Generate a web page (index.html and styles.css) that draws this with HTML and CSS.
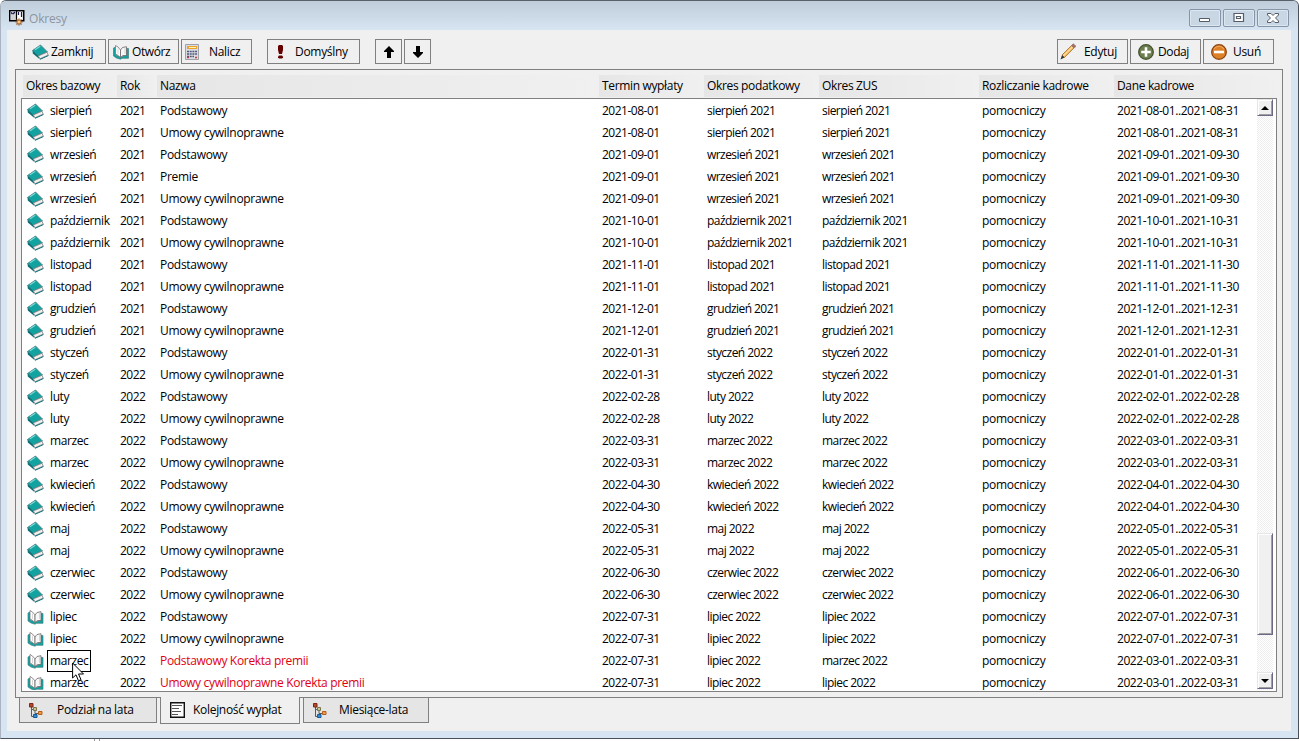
FILE: index.html
```html
<!DOCTYPE html>
<html lang="pl">
<head>
<meta charset="utf-8">
<title>Okresy</title>
<link rel="stylesheet" href="styles.css">
</head>
<body>
<svg class="defs" width="0" height="0">
  <symbol id="book" viewBox="0 0 17 16">
    <path d="M.5 6.500 8.500 1 15.500 8 6 12Z" fill="#12a3a1" stroke="#4f7f84" stroke-width=".9"/>
    <path d="M3 5.800 8.300 2.300" stroke="#79dcd8" stroke-width="1.100"/>
    <path d="M.5 6.500 6 11.800 8 15.500 .800 9.500Z" fill="#0a6f76"/>
    <path d="M6.300 12 15 8.300 16.200 11 8.300 14.600Z" fill="#f2f2f2" stroke="#777" stroke-width=".7"/>
    <path d="M8 15.300 16.500 11.500" stroke="#0a6f76" stroke-width="1"/>
  </symbol>
  <symbol id="open" viewBox="0 0 16 16">
    <path d="M.5 4 2.500 3V11L8 13 13 11.500 13.500 4.500H15.500V14.300H9L7.500 15.200 3.500 14 .5 12Z" fill="#12a3a1" stroke="#3f7f84" stroke-width=".7"/>
    <path d="M2.500 1.500 5 3 7.500 6V13.500L4.500 11 2.500 10Z" fill="#fff" stroke="#777" stroke-width=".8"/>
    <path d="M7.500 6 9.500 3.500 13.500 2.700V11.500L10 11.500 7.500 13.500Z" fill="#f7f7f7" stroke="#666" stroke-width=".8"/>
    <path d="M12 4V10M5 4.500V10" stroke="#ccc" stroke-width=".8"/>
  </symbol>
  <symbol id="tree" viewBox="0 0 14 15">
    <path d="M2.500 4V13.500H5M2.500 6.500H5M6 8V10.500H9" fill="none" stroke="#555c60" stroke-width="1"/>
    <path d="M.5 .5h3.500v3.500h-3.500z" fill="#b5482c" stroke="#7c2814"/>
    <path d="M4.500 4.500h3v3h-3z" fill="#c8c795" stroke="#777749"/>
    <path d="M9.500 8.500h3.500v3h-3.500z" fill="#ee9a47" stroke="#b25f1d"/>
    <path d="M4.500 11.500h3.500v3h-3.500z" fill="#318ed5" stroke="#17599a"/>
  </symbol>
  <symbol id="up" viewBox="0 0 10 12"><path d="M5 0 10 5V6H7V12H3V6H0V5Z"/></symbol>
</svg>
<div class="window">
  <header class="titlebar">
    <svg class="appicon" width="17" height="17" viewBox="0 0 17 17">
      <path d="M.8 1.800h13.900v9.900H.800z" fill="#fff" stroke="#000" stroke-width="1.600"/>
      <path d="M1.600 2.600h5.400v8.400h-5.400z" fill="#d4d4d8"/><path d="M7.500 2v9" stroke="#000" stroke-width="1.200"/>
      <path d="M2 3.500l1.500 1.500M4 5l2-2M9.500 3v3M12.500 3v5" stroke="#171752" stroke-width="1.200"/>
      <path d="M10 9.500v7M6.500 13h7M7.500 10.500l5 5M12.500 10.500l-5 5" stroke="#8e4a16" stroke-width="1.200"/><path d="M8.500 11.500h3v3h-3z" fill="#ffc680"/>
    </svg>
    <span class="caption">Okresy</span>
    <div class="winbtns">
      <span><svg width="12" height="10" viewBox="0 0 12 10"><path d="M.5 5.500h10v3h-10z" fill="#fff" stroke="#555d69"/></svg></span>
      <span><svg width="12" height="10" viewBox="0 0 12 10"><path d="M1 .5h9.500v8h-9.500z" fill="#fff" stroke="#555d69" stroke-width="1.200"/><path d="M3.500 3.500h4v2h-4z" fill="#fff" stroke="#555d69" stroke-width="1.200"/></svg></span>
      <span><svg width="12" height="10" viewBox="0 0 12 10"><path d="M.5.500H4L6 2.500 8 .500h3.500V2L8.500 5l3 3v1.500H8L6 7.500 4 9.500H.5V8l3-3-3-3Z" fill="#fff" stroke="#555d69"/></svg></span>
    </div>
  </header>
  <main class="client">
    <nav class="toolbar">
      <button class="b1"><svg width="17" height="16"><use href="#book"/></svg><span>Zamknij</span></button>
      <button class="b2"><svg width="16" height="16"><use href="#open"/></svg><span>Otwórz</span></button>
      <button class="b3"><svg width="14" height="16" viewBox="0 0 14 16"><path d="M.5.500h13v15h-13z" fill="#dcdce2" stroke="#a0a0a8"/><path d="M2 2h10v3H2z" fill="#eaa32c"/><path d="M4 3.500h7" stroke="#fff3bb"/><path d="M2 7.500h10M2 10h10M2 12.500h7" stroke="#4c5678" stroke-width="1.400" stroke-dasharray="2 .7"/><path d="M2 13.500h2M10 13.500h2" stroke="#c4432f" stroke-width="1.500"/></svg><span>Nalicz</span></button>
      <button class="b4"><svg width="5" height="14" viewBox="0 0 5 14"><path d="M1 0h3l1 1v4L4 9H1L0 5V1Z" fill="#640000"/><path d="M1 10.500h3l1 1v1l-1 1H1l-1-1v-1Z" fill="#640000"/></svg><span>Domyślny</span></button>
      <button class="b5"><svg width="10" height="12"><use href="#up"/></svg></button>
      <button class="b6"><svg class="flip" width="10" height="12"><use href="#up"/></svg></button>
      <i class="grow"></i>
      <button class="b7"><svg width="17" height="17" viewBox="0 0 17 17"><path d="M2 12 11.500 2.500 14 5 4.500 14.500Z" fill="#f1b55e" stroke="#a8702e" stroke-width=".8"/><path d="M3.200 13 12.500 3.800" stroke="#ffe0a0" stroke-width="1.100"/><path d="M2 12 4.500 14.500 .5 16.500Z" fill="#333"/><path d="M11.500 2.500 13.200 .8 16 3.300 14 5Z" fill="#b9675c" stroke="#777" stroke-width=".7"/></svg><span>Edytuj</span></button>
      <button class="b8"><svg width="16" height="16" viewBox="0 0 16 16"><circle cx="8" cy="8" r="7.300" fill="#6d7f50" stroke="#45532f" stroke-width="1.300"/><path d="M8 3.200v9.600M3.200 8h9.600" stroke="#fff" stroke-width="2.600"/></svg><span>Dodaj</span></button>
      <button class="b9"><svg width="16" height="16" viewBox="0 0 16 16"><circle cx="8" cy="8" r="7.300" fill="#dd8128" stroke="#8d4310" stroke-width="1.300"/><path d="M3 5a6 6 0 0 1 10 0" fill="none" stroke="#f0ad62"/><path d="M3 8h10" stroke="#fff" stroke-width="2.600"/></svg><span>Usuń</span></button>
    </nav>
    <section class="panel">
      <div class="row head"><span>Okres bazowy</span><span>Rok</span><span>Nazwa</span><span>Termin wypłaty</span><span>Okres podatkowy</span><span>Okres ZUS</span><span>Rozliczanie kadrowe</span><span>Dane kadrowe</span></div>
      <div class="list">
        <div class="rows" id="rows"></div>
        <div class="scroll"><span class="sb"><i></i></span><span class="thumb"></span><span class="sb"><i class="down"></i></span></div>
      </div>
    </section>
    <footer class="tabs">
      <div class="tab t1"><svg width="14" height="15"><use href="#tree"/></svg><span>Podział na lata</span></div>
      <div class="tab t2 active"><svg width="15" height="16" viewBox="0 0 15 16"><path d="M.7.700h13.600v14.600H.7z" fill="#fff" stroke="#111" stroke-width="1.400"/><path d="M2 3.500h10M2 6.500h7M2 9.500h9M2 12.500h6" stroke="#555"/></svg><span>Kolejność wypłat</span></div>
      <div class="tab t3"><svg width="14" height="15"><use href="#tree"/></svg><span>Miesiące-lata</span></div>
    </footer>
  </main>
  <svg class="cursor" width="13" height="20" viewBox="0 0 13 20"><path d="M.6 1V16L4 12.800 6.500 18.800 9 17.700 6.500 12H11.500Z" fill="#fff" stroke="#000"/></svg>
</div>
<div class="below"><i></i></div>
<script src="rows.js"></script>
</body>
</html>
```
FILE: styles.css
```css
* { box-sizing: border-box; }
body { margin: 0; width: 1299px; height: 741px; overflow: hidden; background: #fff; font: 12px/22px "Open Sans", "Noto Sans", sans-serif; letter-spacing: -.3px; color: #000; white-space: nowrap; }
.defs { display: block; height: 0; position: absolute; }
svg, i { display: block; flex: none; }
.window { position: relative; height: 739px; border: 1px solid #4c5058; border-left-color: #aab4c0; border-top-color: #59616a; border-radius: 6px 6px 0 0; background: #d7e4f2; padding: 0 7px 7px 6px; display: flex; flex-direction: column; }
.titlebar { height: 29px; margin: 0 -7px 0 -6px; padding: 8px 9px 0 8px; display: flex; border-radius: 5px 5px 0 0; background: linear-gradient(#bfcddb, #d7e4f2); }
.caption { color: #8d959e; margin: -1px 0 0 3px; letter-spacing: -.2px; }
.winbtns { display: flex; gap: 2px; margin-left: auto; }
.winbtns span { width: 32px; height: 18px; border: 1px solid #8694a8; border-radius: 2px; display: flex; align-items: center; justify-content: center; background: #c9d6e4; box-shadow: inset 0 0 0 1px #dce6f0; }
.client { background: #f0f0f0; flex: 1; }
.toolbar { display: flex; padding: 9px 17px 0; height: 39px; }
button { font: inherit; letter-spacing: inherit; color: #000; height: 25px; padding: 0; border: 1px solid #808080; background: #f0f0f0; display: flex; align-items: center; flex: none; }
.b1 { width: 82px; padding-left: 7px; margin-right: 2px; } .b1 span { margin-left: 2px; }
.b2 { width: 71px; padding-left: 4px; margin-right: 2px; letter-spacing: -.4px; } .b2 span { margin-left: 3px; }
.b3 { width: 71px; padding-left: 3px; margin-right: 15px; } .b3 span { margin-left: 10px; }
.b4 { width: 93px; padding-left: 10px; margin-right: 15px; } .b4 span { margin-left: 12px; }
.b5, .b6 { width: 27px; justify-content: center; } .b5 { margin-right: 2px; }
.flip { transform: scaleY(-1); }
.grow { flex: 1; }
.b7 { width: 71px; padding-left: 2px; margin-right: 2px; } .b7 span { margin-left: 7px; }
.b8 { width: 71px; padding-left: 7px; margin-right: 2px; letter-spacing: -.4px; } .b8 span { margin-left: 4px; }
.b9 { width: 71px; padding-left: 7px; } .b9 span { margin-left: 6px; }
.panel { margin: 0 8px; height: 629px; border: 1px solid #808080; padding: 5px 5px; }
.row { display: grid; grid-template-columns: 94px 40px 442px 105px 115px 160px 135px 1fr; height: 22px; padding-left: 4px; }
.head { padding-left: 2px; letter-spacing: -.34px; }
.head span { background: linear-gradient(90deg, #e6e6e6, #f0f0f0); padding-left: 3px; }
.list { height: 594px; border: 1px solid #808080; background: #fff; display: flex; margin-top: 1px; }
.rows { flex: 1; height: 591px; overflow: hidden; padding-top: 1px; }
.rows .first { display: flex; align-items: center; gap: 6px; padding-left: 1px; letter-spacing: -.4px; }
.rows .num { letter-spacing: -.5px; }
.rows .month { letter-spacing: -.55px; }
.rows .range { letter-spacing: -.44px; }
.rows .name.red { color: #e00010; letter-spacing: -.32px; }
.focus { outline: 1px solid #000; outline-offset: 2px; line-height: 16px; }
.scroll { width: 16px; margin-right: 3px; height: 591px; padding: 0 0 1px; background: repeating-conic-gradient(#fff 0 25%, #eee 0 50%) 0 0/2px 2px; display: flex; flex-direction: column; }
.sb, .thumb { border: 1px solid #e6e6e6; border-right-color: #6c6988; border-bottom-color: #6c6988; box-shadow: inset 1px 1px #fff, inset -1px -1px #a0a0a0; background: #f0f0f0; }
.sb { height: 17px; display: flex; align-items: center; justify-content: center; }
.sb i { border: 4px solid transparent; border-top: 0; border-bottom: 4px solid #000; }
.sb .down { transform: scaleY(-1); }
.thumb { height: 102px; margin: 417px 0 auto; }
.tabs { display: flex; margin-left: 12px; align-items: flex-start; }
.tab { display: flex; align-items: center; height: 25px; border: 1px solid #808080; border-top: 0; background: #e5e5e5; }
.t1 { width: 138px; padding-left: 9px; margin-right: 3px; } .t1 span { margin-left: 14px; }
.t2 { width: 140px; padding-left: 9px; margin-right: 3px; } .t2 span { margin-left: 8px; }
.t3 { width: 126px; padding-left: 9px; } .t3 span { margin-left: 12px; }
.tab.active { background: #f0f0f0; margin-top: -1px; height: 27px; }
.cursor { position: absolute; left: 71px; top: 661px; }
.below { height: 2px; padding-left: 94px; }
.below i { width: 6px; height: 2px; border: 1px solid #999; border-width: 0 1px; }
```
FILE: rows.js
```js
const P = 'Podstawowy', U = 'Umowy cywilnoprawne';
// month, year, due date, year-month, last day, names, tax month, ZUS month
const periods = [
  ['sierpień', 2021, '2021-08-01', '2021-08', 31, [P, U]],
  ['wrzesień', 2021, '2021-09-01', '2021-09', 30, [P, 'Premie', U]],
  ['październik', 2021, '2021-10-01', '2021-10', 31, [P, U]],
  ['listopad', 2021, '2021-11-01', '2021-11', 30, [P, U]],
  ['grudzień', 2021, '2021-12-01', '2021-12', 31, [P, U]],
  ['styczeń', 2022, '2022-01-31', '2022-01', 31, [P, U]],
  ['luty', 2022, '2022-02-28', '2022-02', 28, [P, U]],
  ['marzec', 2022, '2022-03-31', '2022-03', 31, [P, U]],
  ['kwiecień', 2022, '2022-04-30', '2022-04', 30, [P, U]],
  ['maj', 2022, '2022-05-31', '2022-05', 31, [P, U]],
  ['czerwiec', 2022, '2022-06-30', '2022-06', 30, [P, U]],
  ['lipiec', 2022, '2022-07-31', '2022-07', 31, [P, U]],
  ['marzec', 2022, '2022-07-31', '2022-03', 31, [P + ' Korekta premii'], 'lipiec', 'marzec'],
  ['marzec', 2022, '2022-07-31', '2022-03', 31, [U + ' Korekta premii'], 'lipiec', 'lipiec']
];
let html = '', n = 0;
for (const [month, year, due, ym, last, names, tax = month, zus = month] of periods) {
  for (const name of names) {
    const red = name.includes('Korekta');
    const open = red || month === 'lipiec';
    const focus = n === 25 ? 'focus' : '';
    html += `<div class="row"><span class="first"><svg width="17" height="16"><use href="#${open ? 'open' : 'book'}"/></svg><span class="${focus}">${month}</span></span><span class="num">${year}</span><span class="name ${red ? 'red' : ''}">${name}</span><span class="num">${due}</span><span class="month">${tax} ${year}</span><span class="month">${zus} ${year}</span><span>pomocniczy</span><span class="range">${ym}-01..${ym}-${last}</span></div>`;
    n++;
  }
}
document.getElementById('rows').innerHTML = html;
```
